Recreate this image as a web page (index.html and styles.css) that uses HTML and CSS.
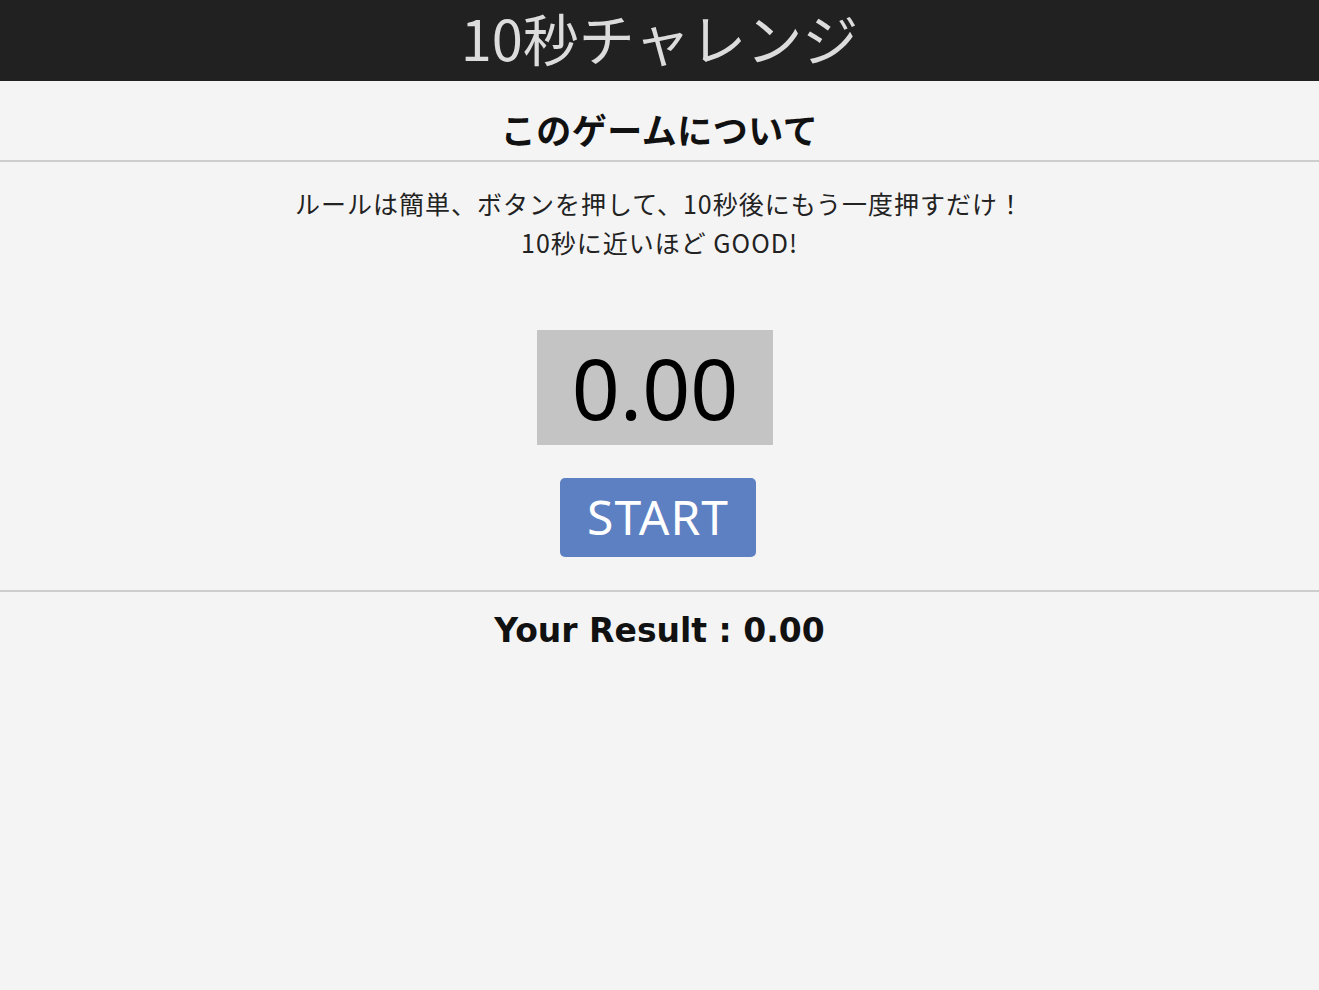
FILE: index.html
```html
<!DOCTYPE html>
<html lang="ja">
<head>
<meta charset="utf-8">
<title>10秒チャレンジ</title>
<link rel="stylesheet" href="styles.css">
</head>
<body>
<header class="site-header">
  <h1 class="site-title">10秒チャレンジ</h1>
</header>
<main class="game">
  <h2 class="about-title">このゲームについて</h2>
  <hr class="rule">
  <p class="about-text">ルールは簡単、ボタンを押して、10秒後にもう一度押すだけ！<br>10秒に近いほど GOOD!</p>
  <div class="timer">0.00</div>
  <button class="start-btn" type="button">START</button>
  <hr class="rule rule-bottom">
  <p class="result">Your Result : 0.00</p>
</main>
</body>
</html>
```

FILE: styles.css
```css
html, body {
  margin: 0;
  padding: 0;
  background: #f4f4f4;
}
body {
  font-family: "Noto Sans CJK JP", "Noto Sans", sans-serif;
  color: #111;
}
.site-header {
  background: #212121;
  height: 81px;
  display: flex;
  align-items: center;
  justify-content: center;
}
.site-title {
  margin: 0 0 8px;
  font-weight: 400;
  font-size: 56px;
  line-height: 66px;
  color: #dcdcdc;
}
.game {
  display: flex;
  flex-direction: column;
  align-items: center;
}
.about-title {
  margin: 0;
  height: 79px;
  display: flex;
  align-items: center;
  justify-content: center;
  padding-top: 16px;
  font-size: 35px;
  letter-spacing: 0.5px;
  font-weight: 700;
  box-sizing: border-box;
}
.rule {
  align-self: stretch;
  margin: 0;
  border: 0;
  height: 2px;
  background: #cdcdcd;
}
.about-text {
  margin: 22px 0 0;
  font-size: 25px;
  letter-spacing: 1px;
  line-height: 39px;
  text-align: center;
  color: #222;
}
.timer {
  margin: 68px 9px 0 0;
  width: 236px;
  height: 115px;
  background: #c4c4c4;
  display: flex;
  align-items: center;
  justify-content: center;
  font-family: "Noto Sans", sans-serif;
  font-size: 84px;
  color: #000;
  line-height: 1;
}
.start-btn {
  margin: 33px 3px 0 0;
  width: 196px;
  height: 79px;
  background: #5d80c3;
  border: 0;
  border-radius: 5px;
  color: #fff;
  font-family: "Noto Sans", sans-serif;
  font-size: 48px;
  letter-spacing: 1px;
  padding: 0 0 2px;
}
.rule-bottom {
  margin-top: 33px;
}
.result {
  margin: 19px 0 0;
  font-family: "DejaVu Sans", sans-serif;
  font-weight: 700;
  font-size: 33px;
  color: #111;
}
```
